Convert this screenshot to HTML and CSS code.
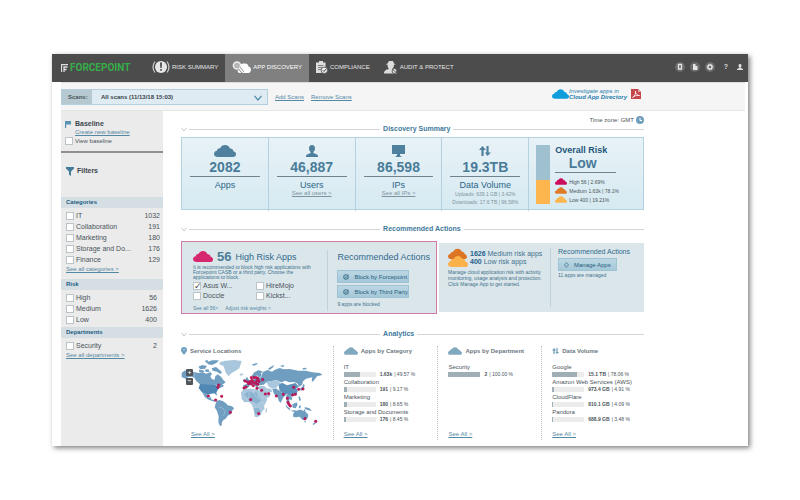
FILE: index.html
```html
<!DOCTYPE html>
<html lang="en">
<head>
    <meta charset="UTF-8">
    <title>Forcepoint - App Discovery</title>
    <link rel="stylesheet" href="styles.css">
</head>
<body>
<svg class="defs" aria-hidden="true">
    <symbol id="cloud" viewBox="0 0 22 12"><path d="M4 12C1.500 12 0 10.800 0 9C0 7.200 1.300 6 3 5.800C3.200 4 4.500 3.200 6 3.300C7 1.200 8.800 0 11 0C13.500 0 15.300 1.400 16 3.500C18 3.400 19.300 4.600 19.400 6.300C21 6.700 22 7.700 22 9.200C22 11 20.800 12 19 12Z"/></symbol>
    <symbol id="person" viewBox="0 0 12 12"><path d="M6 0C8 0 9 1.300 9 3.200C9 5 8.200 6.300 7.400 6.900V8L11 9.400C11.700 9.700 12 10.300 12 11V12H0V11C0 10.300 .3 9.700 1 9.400L4.600 8V6.900C3.800 6.300 3 5 3 3.200C3 1.300 4 0 6 0Z"/></symbol>
    <symbol id="arrows" viewBox="0 0 12 12"><path d="M3.500 1L7 5H4.600V11H2.400V5H0ZM8.500 11L5.800 7.500H7.500V1H9.600V7.500H12Z"/></symbol>
    <symbol id="chevron" viewBox="0 0 6 5"><path d="M.5 .8L3 4L5.500 .8" fill="none" stroke="#c3c9cc"/></symbol>
    <symbol id="check" viewBox="0 0 8 8"><circle cx="4" cy="4" r="3" fill="none" stroke="#467791" stroke-width="1.400"/><path d="M2.500 3.800L4 5.200L7 1" fill="none" stroke="#467791" stroke-width="1.200"/></symbol>
</svg>

<div class="window">
    <header class="header">
        <a class="logo" href="#">
            <svg width="7" height="8" viewBox="0 0 7 8"><path d="M.5 8V.5H7M3 8V3H6.500M3 5.500H5.500" fill="none" stroke="#ddd" stroke-width="1.300"/></svg>
            FORCEPOINT
        </a>
        <nav class="nav">
            <a class="tab" href="#">
                <svg width="18" height="14" viewBox="0 0 18 14"><circle cx="9" cy="7" r="6" fill="#e6e6e6"/><path d="M3 1.500Q-1 7 3 12.500M15 1.500Q19 7 15 12.500" fill="none" stroke="#ccc" stroke-width="1.200"/><path d="M8 2.500H10L9.700 8H8.300ZM8.200 9H9.800V10.800H8.200Z" fill="#4c4c4c"/></svg>
                RISK SUMMARY
            </a>
            <a class="tab active" href="#">
                <svg width="19" height="13" viewBox="0 0 19 13"><path d="M8 12C5.500 12 5 10 6.500 8.500C7 4 9 2 12 2.500C15 2 16.500 4 16.500 5.500C19 6 19.500 9 18.500 10.500Q18 12 16 12Z" fill="#fff"/><circle cx="5" cy="4.500" r="3.600" fill="#b5b5b5" stroke="#eee" stroke-width="1.500"/><path d="M7.300 7L11 11.500" stroke="#808080" stroke-width="3"/><path d="M7.300 7L11 11.500" stroke="#fff" stroke-width="1.600"/></svg>
                APP DISCOVERY
            </a>
            <a class="tab" href="#">
                <svg width="12" height="13" viewBox="0 0 12 13"><path d="M0 1.500H3V0H7V1.500H9.500V12H0Z" fill="#ddd"/><path d="M2 4.500H7.500M2 6.500H7.500M2 8.500H5" stroke="#666" stroke-width=".8"/><circle cx="8.300" cy="9.300" r="3.200" fill="#eee" stroke="#4c4c4c" stroke-width=".8"/><path d="M6.700 9.200L8 10.500L10 8" fill="none" stroke="#4c4c4c"/></svg>
                COMPLIANCE
            </a>
            <a class="tab" href="#">
                <svg width="14" height="13" viewBox="0 0 14 13"><path d="M3.500 2.500L5 0H9L10 2.500L12 3.500H10C10 6 9 7.500 8 8L13 12.500H0C0 9.500 2.500 8.500 5 8C4 7 3.500 5.500 3.500 3.500H1.500Z" fill="#ddd"/><circle cx="10.500" cy="10" r="2.400" fill="#eee" stroke="#4c4c4c" stroke-width=".9"/><path d="M9 8.500L12 11.500" stroke="#4c4c4c"/></svg>
                AUDIT &amp; PROTECT
            </a>
        </nav>
        <div class="tools">
            <button class="tool round" aria-label="Devices"><svg width="10" height="10" viewBox="0 0 10 10"><path d="M3.500 2.500H6.500V7H3.500Z" fill="none" stroke="#e4e4e4" stroke-width="1.300"/></svg></button>
            <button class="tool round" aria-label="Reports"><svg width="10" height="10" viewBox="0 0 10 10"><path d="M3 2H5.500V4H7.500V8H3Z" fill="#e4e4e4"/></svg></button>
            <button class="tool round" aria-label="Settings"><svg width="10" height="10" viewBox="0 0 10 10"><circle cx="5" cy="5" r="2" fill="none" stroke="#e4e4e4" stroke-width="1.400"/><circle cx="5" cy="5" r="2.800" fill="none" stroke="#e4e4e4" stroke-dasharray="1.100 1.100"/></svg></button>
            <button class="tool help">?</button>
            <button class="tool" aria-label="Account"><svg width="6" height="6" fill="#ddd"><use href="#person"/></svg></button>
        </div>
    </header>

    <div class="toolbar">
        <div class="scans">
            <label for="scans">Scans:</label>
            <select id="scans"><option>All scans (11/13/18 15:03)</option></select>
            <svg class="arrow" width="8" height="6" viewBox="0 0 8 6"><path d="M.5 .8L4 5L7.500 .8" fill="none" stroke="#4e8cab" stroke-width="1.200"/></svg>
        </div>
        <a href="#">Add Scans</a>
        <a href="#">Remove Scans</a>
        <div class="extras">
            <a class="directory" href="#">
                <svg width="17" height="10" fill="#0f9edb"><use href="#cloud"/></svg>
                <span>Investigate apps in<br><b>Cloud App Directory</b></span>
            </a>
            <button aria-label="Export to PDF"><svg width="10" height="10" viewBox="0 0 10 10"><path d="M0 0H7L10 3V10H0Z" fill="#c5474a"/><path d="M7 0V3H10Z" fill="#e7a6a6"/><path d="M1.500 8.500C4 7 5 4 4.500 2C4 4 6 6.500 8.500 6.500C6 6 3 7 1.500 8.500Z" fill="none" stroke="#fff" stroke-width=".8"/></svg></button>
        </div>
    </div>

    <div class="body">
        <aside class="sidebar">
            <div class="baseline">
                <h2><svg width="6" height="7" viewBox="0 0 6 7"><path d="M0 0H6V3.500H1.200V7H0Z" fill="#5b93b2"/></svg>Baseline</h2>
                <a href="#">Create new baseline</a>
                <label><input type="checkbox">View baseline</label>
            </div>
            <h2 class="filters"><svg width="8" height="9" viewBox="0 0 8 9"><path d="M0 0H8V1.500L5 4.500V9L3 7.500V4.500L0 1.500Z" fill="#437b9b"/></svg>Filters</h2>

            <h3>Categories</h3>
            <div class="group categories">
                <label><input type="checkbox">IT<span>1032</span></label>
                <label><input type="checkbox">Collaboration<span>191</span></label>
                <label><input type="checkbox">Marketing<span>180</span></label>
                <label><input type="checkbox">Storage and Do...<span>176</span></label>
                <label><input type="checkbox">Finance<span>129</span></label>
                <a href="#">See all categories &gt;</a>
            </div>
            <h3>Risk</h3>
            <div class="group">
                <label><input type="checkbox">High<span>56</span></label>
                <label><input type="checkbox">Medium<span>1626</span></label>
                <label><input type="checkbox">Low<span>400</span></label>
            </div>
            <h3>Departments</h3>
            <div class="group">
                <label><input type="checkbox">Security<span>2</span></label>
                <a href="#">See all departments &gt;</a>
            </div>
        </aside>

        <main class="main">
            <div class="timezone">Time zone: GMT <svg width="8" height="8" viewBox="0 0 8 8"><circle cx="4" cy="4" r="4" fill="#6f9fba"/><path d="M4 2V4.500H6" fill="none" stroke="#fff"/></svg></div>

            <h2 class="title"><svg width="6" height="5"><use href="#chevron"/></svg><span>Discovery Summary</span></h2>
            <section class="summary">
                <div class="stat">
                    <svg width="22" height="12"><use href="#cloud"/></svg>
                    <strong>2082</strong>
                    <p>Apps</p>
                </div>
                <div class="stat">
                    <svg width="12" height="12"><use href="#person"/></svg>
                    <strong>46,887</strong>
                    <p>Users</p>
                    <a href="#">See all users &gt;</a>
                </div>
                <div class="stat">
                    <svg width="13" height="12" viewBox="0 0 13 12"><path d="M0 0H13V9H8V10.500L10 12H3L5 10.500V9H0Z"/></svg>
                    <strong>86,598</strong>
                    <p>IPs</p>
                    <a href="#">See all IPs &gt;</a>
                </div>
                <div class="stat">
                    <svg width="12" height="12"><use href="#arrows"/></svg>
                    <strong>19.3TB</strong>
                    <p>Data Volume</p>
                    <small>Uploads: 639.1 GB | 3.42%</small>
                    <small>Downloads: 17.6 TB | 96.58%</small>
                </div>
                <div class="risk">
                    <div class="gauge"><div style="height:40%"></div></div>
                    <div class="overall">
                        <h3>Overall Risk</h3>
                        <strong>Low</strong>
                        <ul>
                            <li><svg width="12" height="7" fill="#cb0f5c"><use href="#cloud"/></svg>High 56 | 2.69%</li>
                            <li><svg width="12" height="7" fill="#df7a27"><use href="#cloud"/></svg>Medium 1.63k | 78.1%</li>
                            <li><svg width="12" height="7" fill="#fdb64d"><use href="#cloud"/></svg>Low 400 | 19.21%</li>
                        </ul>
                    </div>
                </div>
            </section>

            <h2 class="title"><svg width="6" height="5"><use href="#chevron"/></svg><span>Recommended Actions</span></h2>
            <section class="actions">
                <div class="panel high">
                    <div class="info">
                        <h3><svg width="20" height="11" fill="#d6286f"><use href="#cloud"/></svg><b>56</b> High Risk Apps</h3>
                        <p>It is recommended to block high risk applications with<br>Forcepoint CASB or a third party. Choose the<br>applications to block.</p>
                        <div class="apps">
                            <label><input type="checkbox" checked>Asus W...</label>
                            <label><input type="checkbox">HireMojo</label>
                            <label><input type="checkbox">Doccle</label>
                            <label><input type="checkbox">Kickst...</label>
                        </div>
                        <div class="more"><a href="#">See all 56&gt;</a><a href="#">Adjust risk weights &gt;</a></div>
                    </div>
                    <div class="do">
                        <h3>Recommended Actions</h3>
                        <button><svg width="6" height="6"><use href="#check"/></svg>Block by Forcepoint</button>
                        <button><svg width="6" height="6"><use href="#check"/></svg>Block by Third Party</button>
                        <small>9 apps are blocked</small>
                    </div>
                </div>
                <div class="panel medium">
                    <div class="info">
                        <div class="levels">
                            <svg width="20" height="20" viewBox="0 0 20 20"><use href="#cloud" width="19" height="12" fill="#dc7524"/><use href="#cloud" y="8" width="20" height="11" fill="#fbb14a"/></svg>
                            <div><b>1626</b> Medium risk apps<br><b>400</b> Low risk apps</div>
                        </div>
                        <p>Manage cloud application risk with activity<br>monitoring, usage analysis and protection.<br>Click Manage App to get started.</p>
                    </div>
                    <div class="do">
                        <h3>Recommended Actions</h3>
                        <button><svg width="5" height="6" viewBox="0 0 5 6"><path d="M2.500 .5L4.500 3L2.500 5.500L.5 3Z" fill="none" stroke="#5c8aa3"/></svg>Manage Apps</button>
                        <small>11 apps are managed</small>
                    </div>
                </div>
            </section>

            <h2 class="title"><svg width="6" height="5"><use href="#chevron"/></svg><span>Analytics</span></h2>
            <section class="analytics">
                <div class="col locations">
                    <h3><svg width="6" height="8" viewBox="0 0 6 8"><path d="M3 0C5 0 6 1.300 6 3C6 4.500 4.500 6 3 8C1.500 6 0 4.500 0 3C0 1.300 1 0 3 0Z" fill="#6e9fbd"/><circle cx="3" cy="2.800" r="1" fill="#a9c9da"/></svg>Service Locations</h3>
                    <div class="map">
                        <svg viewBox="20 102 429 207" role="img" aria-label="World map">
                            <g fill="#6f9ec0">
                                <path d="M22 144L30 137L45 137L60 141L60 158L52 155L42 156L34 163L30 159L22 157Z"/>
                                <path d="M60 141L72 144L84 141L96 146L108 141L113 147L108 154L112 161L120 165L123 154L130 148L140 155L147 165L154 172L144 179L150 183L138 188L128 182L122 178L76 177L66 168L60 158Z"/>
                                <path d="M77 177L122 178L128 184L139 184L132 192L126 203L128 212L120 205L108 207L99 209L83 202L73 190Z" fill="#4f88b5"/>
                                <path d="M83 202L99 209L102 218L111 216L110 223L119 225L124 232L116 229L103 224L92 217Z"/>
                                <path d="M72 125L84 120L98 123L92 131L78 133ZM97 112L114 106L134 106L126 114L113 120L101 118ZM112 130L125 126L135 134L143 141L138 147L128 140L115 137ZM91 134L102 133L106 140L95 141ZM73 134L87 136L90 141L75 141ZM92 107L99 105L102 109L95 113Z"/>
                                <path d="M126 229L134 225L145 228L155 235L160 241L173 244L179 250L173 258L170 267L160 272L154 281L147 285L142 294L143 301L137 303L132 292L133 274L128 258L121 247Z"/>
                                <path d="M265 141L280 135L293 140L302 134L316 129L328 133L346 132L372 137L394 137L414 142L437 144L444 150L428 154L422 162L415 171L412 164L414 157L395 161L386 169L383 180L374 185L370 176L360 171L344 172L333 167L321 172L307 166L291 168L276 171L268 180L256 175L251 163L262 154Z"/>
                                <path d="M281 131L293 123L300 121L294 129L285 135ZM317 123L329 119L327 127ZM231 119L247 114L250 117L239 122ZM384 130L394 128L398 132L387 134Z"/>
                                <path d="M232 153L240 142L252 136L265 139L260 145L262 152L253 158L248 150L242 160L235 159ZM213 163L218 155L223 164L229 169L218 174ZM206 164L211 161L212 168L206 170Z"/>
                                <path d="M207 180L219 177L222 170L233 165L247 160L257 166L265 171L263 180L251 181L248 190L241 181L235 175L228 179L222 187L214 191L207 189Z"/>
                                <path d="M312 178L323 173L338 181L349 178L363 174L374 185L366 190L370 199L367 208L355 214L345 211L335 207L326 206L316 198Z" fill="#5c92bb"/>
                                <path d="M294 192L305 190L316 198L327 207L337 208L328 216L323 225L319 234L313 227L309 214L299 207Z"/>
                                <path d="M336 209L349 211L354 219L352 226L345 223L344 237L350 246L345 246L338 235L336 222ZM333 238L340 245L348 252L345 256L336 247ZM348 257L360 256L372 259L360 261ZM354 238L367 232L370 239L364 250L355 248ZM374 243L380 240L378 250L373 250ZM391 246L405 250L413 258L402 256L392 252ZM372 216L376 213L380 225L376 229ZM377 191L384 185L387 177L391 180L389 190L380 198Z"/>
                                <path d="M356 268L361 260L372 255L382 254L386 259L391 252L394 261L402 269L400 279L392 286L384 284L376 275L365 277L357 276ZM389 289L395 288L393 293ZM422 285L429 288L426 293L418 300L414 297L423 292Z"/>
                            </g>
                            <g fill="#a8c7dc">
                                <path d="M135 112L153 107L180 105L202 108L199 118L195 130L183 138L171 145L163 153L155 145L151 133L147 122L137 119Z"/>
                                <path d="M200 202L209 192L225 191L239 192L252 195L261 199L269 213L279 223L274 234L269 243L271 251L264 258L259 270L249 277L241 275L239 259L236 249L232 238L224 231L210 232L202 222ZM274 253L279 248L277 260L273 264Z"/>
                                <path d="M249 184L269 183L278 190L291 192L293 201L283 202L289 210L282 218L272 221L264 208L258 197L253 192Z"/>
                                <path d="M276 171L291 168L307 166L319 173L323 175L311 181L307 188L294 191L283 185Z"/>
                                <path d="M196 147L205 145L206 150L198 152Z"/>
                            </g>
                            <path d="M210 208L224 199L239 205L246 199L251 216L261 220L257 232L246 239L238 232L226 228ZM239 250L253 247L259 258L252 268L242 266Z" fill="#8bb3d0"/>
                            <path d="M238 192L239 205L246 216L253 222L266 218M224 199L224 218L214 223M224 218L232 230L246 238L257 232L272 236M236 249L253 247L260 257M276 188L283 202M307 188L294 191M133 245L145 249L153 261L147 272" fill="none" stroke="#d9e7f0" stroke-width="1"/>
                            <g fill="#c2185b" stroke="#a30d49" stroke-width="1">
                                <circle cx="133" cy="180" r="4"/><circle cx="131" cy="187" r="4"/><circle cx="102" cy="213" r="4"/><circle cx="142" cy="214" r="4"/><circle cx="124" cy="225" r="4"/><circle cx="168" cy="262" r="4"/>
                                <circle cx="229" cy="224" r="4"/><circle cx="253" cy="266" r="4"/><circle cx="209" cy="189" r="4"/><circle cx="215" cy="186" r="4"/><circle cx="212" cy="168" r="4"/><circle cx="219" cy="171" r="4"/>
                                <circle cx="223" cy="176" r="4"/><circle cx="227" cy="170" r="4"/><circle cx="231" cy="158" r="4"/><circle cx="233" cy="166" r="4"/><circle cx="231" cy="177" r="4"/><circle cx="237" cy="172" r="4"/>
                                <circle cx="239" cy="158" r="4"/><circle cx="246" cy="158" r="4"/><circle cx="251" cy="161" r="4"/><circle cx="247" cy="168" r="4"/><circle cx="254" cy="169" r="4"/><circle cx="244" cy="175" r="4"/>
                                <circle cx="237" cy="182" r="4"/><circle cx="250" cy="178" r="4"/><circle cx="265" cy="164" r="4"/><circle cx="248" cy="190" r="4"/><circle cx="262" cy="196" r="4"/><circle cx="273" cy="207" r="4"/>
                                <circle cx="283" cy="206" r="4"/><circle cx="306" cy="213" r="4"/><circle cx="327" cy="208" r="4"/><circle cx="339" cy="220" r="4"/><circle cx="341" cy="232" r="4"/><circle cx="344" cy="238" r="4"/>
                                <circle cx="348" cy="243" r="4"/><circle cx="358" cy="187" r="4"/><circle cx="373" cy="193" r="4"/><circle cx="386" cy="192" r="4"/><circle cx="355" cy="210" r="4"/><circle cx="363" cy="208" r="4"/>
                                <circle cx="392" cy="281" r="4"/><circle cx="424" cy="289" r="4"/>
                            </g>
                        </svg>
                        <div class="zoom"><button>+</button><button>−</button></div>
                    </div>
                    <a class="all" href="#">See All &gt;</a>
                </div>
                <div class="col">
                    <h3><svg width="14" height="8" fill="#80a8bf"><use href="#cloud"/></svg>Apps by Category</h3>
                    <div class="item">IT<div><span class="bar"><i style="width:50%"></i></span><b>1.63k</b> | 49.57 %</div></div>
                    <div class="item">Collaboration<div><span class="bar"><i style="width:9%"></i></span><b>191</b> | 9.17 %</div></div>
                    <div class="item">Marketing<div><span class="bar"><i style="width:9%"></i></span><b>180</b> | 8.65 %</div></div>
                    <div class="item">Storage and Documents<div><span class="bar"><i style="width:8%"></i></span><b>176</b> | 8.45 %</div></div>
                    <a class="all" href="#">See All &gt;</a>
                </div>
                <div class="col">
                    <h3><svg width="14" height="8" fill="#80a8bf"><use href="#cloud"/></svg>Apps by Department</h3>
                    <div class="item">Security<div><span class="bar"><i style="width:100%"></i></span><b>2</b> | 100.00 %</div></div>
                    <a class="all" href="#">See All &gt;</a>
                </div>
                <div class="col">
                    <h3><svg width="7" height="8" fill="#6c9cb8"><use href="#arrows"/></svg>Data Volume</h3>
                    <div class="item">Google<div><span class="bar"><i style="width:78%"></i></span><b>15.1 TB</b> | 78.06 %</div></div>
                    <div class="item">Amazon Web Services (AWS)<div><span class="bar"><i style="width:5%"></i></span><b>973.4 GB</b> | 4.91 %</div></div>
                    <div class="item">CloudFlare<div><span class="bar"><i style="width:4%"></i></span><b>810.1 GB</b> | 4.09 %</div></div>
                    <div class="item">Pandora<div><span class="bar"><i style="width:3%"></i></span><b>688.9 GB</b> | 3.48 %</div></div>
                    <a class="all" href="#">See All &gt;</a>
                </div>
            </section>
        </main>
    </div>
</div>
</body>
</html>
```

FILE: styles.css
```css
* {
    box-sizing: border-box;
}
body {
    margin: 0;
    padding: 54px 52px;
    background: #fff;
    font-family: "Liberation Sans", Arial, sans-serif;
    font-size: 6px;
    line-height: 8px;
    color: #4a545b;
}
h2, h3, p, ul {
    margin: 0;
    padding: 0;
    font-size: inherit;
}
a {
    color: #5488a3;
}
button {
    font: inherit;
    border: none;
    padding: 0;
    background: none;
    cursor: pointer;
}
svg {
    flex: none;
    display: block;
}
small {
    font-size: 5px;
    line-height: 8px;
}
input[type="checkbox"] {
    appearance: none;
    flex: none;
    width: 8px;
    height: 8px;
    margin: 0;
    background: #fff;
    border: 1px solid #bcc4c8;
}
input[type="checkbox"]:checked::before {
    content: "✓";
    display: block;
    font: bold 9px/6px "DejaVu Sans", sans-serif;
    color: #444;
}
.defs {
    display: none;
}
.window {
    background: #fff;
    box-shadow: 2px 2px 5px rgba(0,0,0,0.5);
}

/* Header */
.header {
    display: flex;
    height: 28px;
    background: #4c4c4c;
}
.header a {
    display: flex;
    align-items: center;
    text-decoration: none;
}
.logo {
    gap: 2px;
    padding-left: 9px;
    font: bold 10px/12px Roboto, sans-serif;
    color: #36ac49;
    width: 93px;
}
.nav {
    display: flex;
}
.tab {
    gap: 2px;
    padding: 0 7px 2px;
    color: #e6e6e6;
}
.tab.active {
    background: #808080;
    color: #fff;
}
.tools {
    display: flex;
    align-items: center;
    gap: 5px;
    margin-left: auto;
    padding: 0 5px 2px 0;
}
.tool {
    color: #ddd;
}
.round {
    width: 10px;
    height: 10px;
    border-radius: 50%;
    background: #6b6b6b;
}
.help {
    padding: 0 4px;
    font-size: 7px;
    font-weight: bold;
}

/* Scan selection */
.toolbar {
    display: flex;
    align-items: center;
    gap: 7px;
    height: 29px;
    margin: 0 3px 0 9px;
    background: #f5f5f5;
    border-top: 1px solid #ddd;
    border-bottom: 1px solid #e6e6e6;
}
.scans {
    position: relative;
    display: flex;
    width: 207px;
    height: 16px;
    border: 1px solid #b3cfdd;
    font-weight: bold;
}
.scans label {
    width: 30px;
    padding-left: 6px;
    line-height: 14px;
    background: #b6c9d1;
}
.scans select {
    flex: 1;
    appearance: none;
    border: none;
    padding: 0 9px;
    font: inherit;
    color: #39444b;
    background: #dfebf3;
}
.scans .arrow {
    position: absolute;
    right: 5px;
    top: 5px;
}
.extras {
    display: flex;
    align-items: center;
    gap: 4px;
    margin: 0 104px 6px auto;
}
.directory {
    display: flex;
    align-items: center;
    line-height: 6px;
    font-style: italic;
    text-decoration: none;
    color: #1f7fae;
}

/* Sidebar */
.body {
    display: flex;
}
.sidebar {
    width: 102px;
    margin-left: 9px;
    background: #ebebeb;
}
.sidebar h2 {
    display: flex;
    align-items: center;
    gap: 4px;
    font-size: 7px;
    color: #3c464d;
}
.sidebar label {
    display: flex;
    align-items: center;
    gap: 2px;
}
.baseline {
    padding: 9px 4px 6px;
    border-bottom: 2px solid #8f8f8f;
}
.baseline a {
    display: block;
    margin-left: 10px;
}
.baseline label {
    margin-top: 1px;
}
.sidebar .filters {
    height: 44px;
    padding: 0 5px 8px;
    gap: 3px;
}
.sidebar h3 {
    padding-left: 5px;
    line-height: 11px;
    color: #1d5d85;
    background: #d5dfe3;
}
.group {
    padding: 2px 6px 2px 5px;
}
.group label {
    height: 11px;
    font-size: 7px;
}
.group label span {
    margin-left: auto;
}
.group a {
    display: block;
}
.categories {
    padding: 2px 3px 6px 5px;
}

/* Main */
.main {
    flex: 1;
    padding: 4px 104px 6px 18px;
}
.timezone {
    display: flex;
    justify-content: flex-end;
    align-items: center;
    gap: 2px;
    height: 9px;
}
.title {
    display: flex;
    align-items: center;
    gap: 2px;
    height: 10px;
    font-size: 7px;
    color: #41799b;
}
.title span {
    display: flex;
    flex: 1;
    align-items: center;
    gap: 3px;
}
.title span::before,
.title span::after {
    content: "";
    height: 1px;
    background: #d5d5d5;
}
.title span::before {
    width: 42%;
}
.title span::after {
    flex: 1;
}
.summary {
    display: grid;
    grid-template-columns: repeat(4, 87fr) 114fr;
    height: 73px;
    margin: 3px 0 14px;
    border: 1px solid #b2d2df;
    background: linear-gradient(#e8f2f7, #d6eaf1);
}
.stat {
    display: flex;
    flex-direction: column;
    align-items: center;
    padding: 7px 8px 0;
    border-right: 1px solid #b2d2df;
    fill: #4f809d;
}
.stat strong {
    align-self: stretch;
    margin-top: 2px;
    height: 18px;
    border-bottom: 1px solid #70828c;
    text-align: center;
    font-size: 14px;
    line-height: 16px;
    color: #4a7c99;
}
.stat p {
    margin-top: 3px;
    font-size: 9px;
    line-height: 10px;
    color: #2b6589;
}
.stat a, .stat small {
    color: #80939e;
}
.stat a {
    line-height: 7px;
}
.risk {
    display: flex;
    gap: 5px;
    padding: 7px;
}
.gauge {
    display: flex;
    align-items: flex-end;
    width: 14px;
    background: #9fc0cf;
}
.gauge div {
    width: 100%;
    background: #fdb64d;
}
.overall h3 {
    font-size: 9px;
    line-height: 10px;
    color: #1f577b;
}
.overall strong {
    display: block;
    width: 61px;
    height: 18px;
    margin-bottom: 4px;
    padding-right: 6px;
    border-bottom: 1px solid #70828c;
    text-align: center;
    font-size: 14px;
    line-height: 16px;
    color: #4a7c99;
}
.overall li {
    display: flex;
    align-items: center;
    gap: 2px;
    height: 9px;
    font-size: 5px;
    white-space: nowrap;
}

/* Recommended actions */
.actions {
    display: grid;
    grid-template-columns: 256fr 205fr;
    align-items: center;
    gap: 2px;
    margin: 7px 0 15px;
    color: #41728c;
}
.panel {
    display: flex;
    min-width: 0;
    background: #dbe6eb;
}
.panel h3 {
    font-weight: normal;
    color: #2f698b;
}
.panel b {
    color: #22618a;
}
.panel p {
    font-size: 5px;
    line-height: 6px;
    white-space: nowrap;
}
.panel button {
    display: flex;
    align-items: center;
    gap: 5px;
    height: 13px;
    padding: 0 5px;
    border: 1px solid #9dc3d5;
    background: linear-gradient(#bcd7e4, #a5c8d8);
    color: #285f7e;
    white-space: nowrap;
}
.do {
    display: flex;
    flex-direction: column;
    align-items: flex-start;
    white-space: nowrap;
}
.high {
    height: 73px;
    padding: 8px 6px 2px 11px;
    border: 1px solid #d27ba6;
}
.high .info {
    flex: 1;
    border-right: 1px solid #c3d2d9;
}
.high h3 {
    display: flex;
    align-items: center;
    gap: 4px;
    height: 14px;
    font-size: 9px;
}
.high .info h3 {
    height: 13px;
    margin-bottom: 2px;
}
.high h3 b {
    font-size: 13px;
    line-height: 13px;
    color: #4a7c99;
}
.high p {
    line-height: 5px;
}
.apps {
    display: grid;
    grid-template-columns: 63px 1fr;
    gap: 2px 0;
    margin: 2px 0 4px;
    font-size: 7px;
    color: #4a545b;
}
.apps label {
    display: flex;
    align-items: center;
    gap: 2px;
}
.more {
    display: flex;
    gap: 7px;
    font-size: 5px;
}
.more a {
    text-decoration: none;
}
.high .do {
    padding-left: 9px;
}
.high .do h3 {
    margin-bottom: 6px;
}
.high .do button {
    width: 72px;
    margin-bottom: 2px;
}
.medium {
    height: 69px;
    padding: 5px 14px 5px 9px;
}
.medium .info {
    flex: 1;
    border-right: 1px solid #c3d2d9;
}
.levels {
    display: flex;
    gap: 2px;
    margin-bottom: 1px;
    font-size: 7px;
}
.levels div {
    padding-top: 2px;
}
.medium .do {
    padding-left: 7px;
}
.medium h3 {
    font-size: 7px;
    margin-bottom: 2px;
}

/* Analytics */
.analytics {
    display: grid;
    grid-template-columns: 153fr 105fr 104fr 102fr;
    margin-top: 7px;
}
.col {
    display: flex;
    flex-direction: column;
    align-items: flex-start;
    min-height: 94px;
    padding-left: 10px;
    border-right: 1px dotted #b5c4cb;
    white-space: nowrap;
}
.col:last-child {
    border-right: none;
}
.col h3 {
    display: flex;
    align-items: center;
    gap: 3px;
    height: 10px;
    margin-bottom: 8px;
    color: #6c7780;
}
.item {
    height: 15px;
    line-height: 7px;
}
.item div {
    display: flex;
    align-items: center;
    gap: 2px;
    height: 7px;
    font-size: 5px;
}
.bar {
    width: 32px;
    height: 5px;
    margin-right: 2px;
    background: #ececec;
}
.bar i {
    display: block;
    height: 5px;
    background: #a0afb6;
}
.all {
    margin-top: auto;
    margin-bottom: 2px;
}
.locations {
    padding-left: 0;
}
.locations h3 {
    margin-bottom: 3px;
}
.locations .all {
    margin-left: 10px;
}
.map {
    position: relative;
    width: 143px;
}
.zoom {
    position: absolute;
    left: 5px;
    top: 10px;
    display: grid;
    gap: 2px;
}
.zoom button {
    width: 7px;
    height: 7px;
    border-radius: 1px;
    background: #50565b;
    color: #fff;
    font-weight: bold;
    line-height: 7px;
}
```
